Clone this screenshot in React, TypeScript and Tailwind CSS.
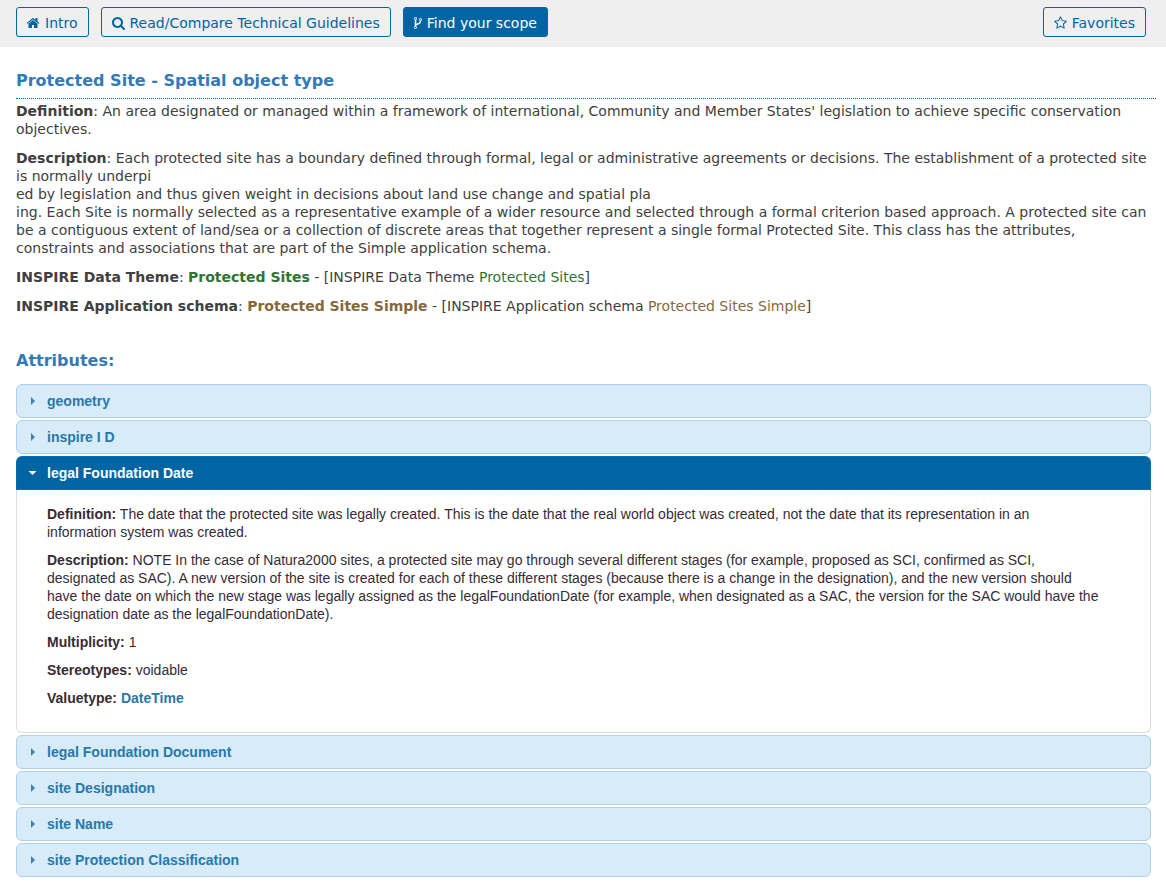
import { useState, type ReactNode } from "react";

const icons = {
  home: {
    box: "64 0 1664 1792",
    size: "h-[14px] w-[13px]",
    d: "M1408 992v480q0 26-19 45t-45 19h-384v-384h-256v384h-384q-26 0-45-19t-19-45v-480q0-1 .5-3t.5-3l575-474 575 474q1 2 1 6zm223-69l-62 74q-8 9-21 11h-3q-13 0-21-7l-692-577-692 577q-12 8-24 7-13-2-21-11l-62-74q-8-10-7-23.5t11-21.5l719-599q32-26 76-26t76 26l244 204v-195q0-14 9-23t23-9h192q14 0 23 9t9 23v408l219 182q10 8 11 21.5t-7 23.5z",
  },
  search: {
    box: "64 0 1664 1792",
    size: "h-[14px] w-[13px]",
    d: "M1216 832q0-185-131.5-316.5t-316.5-131.5-316.5 131.5-131.5 316.5 131.5 316.5 316.5 131.5 316.5-131.5 131.5-316.5zm512 832q0 52-38 90t-90 38q-54 0-90-38l-343-342q-179 124-399 124-143 0-273.5-55.5t-225-150-150-225-55.5-273.5 55.5-273.5 150-225 225-150 273.5-55.5 273.5 55.5 225 150 150 225 55.5 273.5q0 220-124 399l343 343q37 37 37 90z",
  },
  fork: {
    box: "384 0 1024 1792",
    size: "h-[14px] w-[8px]",
    d: "M672 1472q0-40-28-68t-68-28-68 28-28 68 28 68 68 28 68-28 28-68zm0-1152q0-40-28-68t-68-28-68 28-28 68 28 68 68 28 68-28 28-68zm640 128q0-40-28-68t-68-28-68 28-28 68 28 68 68 28 68-28 28-68zm96 0q0 52-26 96.5t-70 69.5q-2 287-226 414-67 38-203 81-128 40-169.5 71t-41.5 100v26q44 25 70 69.5t26 96.5q0 80-56 136t-136 56-136-56-56-136q0-52 26-96.5t70-69.5v-820q-44-25-70-69.5t-26-96.5q0-80 56-136t136-56 136 56 56 136q0 52-26 96.5t-70 69.5v497q54-26 154-57 55-17 87.5-29.5t70.5-31 59-39.5 40.5-51 28-69.5 8.5-91.5q-44-25-70-69.5t-26-96.5q0-80 56-136t136-56 136 56 56 136z",
  },
  star: {
    box: "64 0 1664 1792",
    size: "h-[14px] w-[13px]",
    d: "M1201 1004l306-297-422-62-189-382-189 382-422 62 306 297-73 421 378-199 377 199zm527-357q0 22-26 48l-363 354 86 500q1 7 1 20 0 50-41 50-19 0-40-12l-449-236-449 236q-22 12-40 12-21 0-31.5-14.5t-10.5-35.5q0-6 2-20l86-500-364-354q-25-27-25-48 0-37 56-46l502-73 225-455q19-41 49-41t49 41l225 455 502 73q56 9 56 46z",
  },
};

function ToolbarButton({ icon, active, children }: { icon: keyof typeof icons; active?: boolean; children: ReactNode }) {
  const { box, size, d } = icons[icon];
  return (
    <button
      type="button"
      className={`flex h-[30px] items-center gap-[5px] rounded-[3px] border border-[#0065a2] px-[10px] pt-[2px] whitespace-nowrap ${
        active ? "bg-[#0065a2] text-white" : "text-[#0065a2]"
      }`}
    >
      <svg viewBox={box} className={`shrink-0 fill-current ${size}`} aria-hidden="true">
        <path d={d} />
      </svg>
      {children}
    </button>
  );
}

function LegalFoundationDate() {
  return (
    <>
      <p>
        <b>Definition:</b> The date that the protected site was legally created. This is the date that the real world
        object was created, not the date that its representation in an information system was created.
      </p>
      <p>
        <b>Description:</b> NOTE In the case of Natura2000 sites, a protected site may go through several different
        stages (for example, proposed as SCI, confirmed as SCI, designated as SAC). A new version of the site is created
        for each of these different stages (because there is a change in the designation), and the new version should
        have the date on which the new stage was legally assigned as the legalFoundationDate (for example, when
        designated as a SAC, the version for the SAC would have the designation date as the legalFoundationDate).
      </p>
      <p>
        <b>Multiplicity:</b> 1
      </p>
      <p>
        <b>Stereotypes:</b> voidable
      </p>
      <p>
        <b>Valuetype:</b>{" "}
        <a href="#datetime" className="font-bold text-[#2779aa]">
          DateTime
        </a>
      </p>
    </>
  );
}

const attributes: { name: string; body?: ReactNode }[] = [
  { name: "geometry" },
  { name: "inspire I D" },
  { name: "legal Foundation Date", body: <LegalFoundationDate /> },
  { name: "legal Foundation Document" },
  { name: "site Designation" },
  { name: "site Name" },
  { name: "site Protection Classification" },
];

export default function App() {
  const [open, setOpen] = useState<number | null>(2);

  return (
    <div className="bg-white font-['Verdana','DejaVu_Sans',sans-serif] text-[14px] leading-[18px] text-[#404040]">
      <header className="flex gap-3 bg-[#efefef] pt-[7px] pr-5 pb-[10px] pl-4">
        <ToolbarButton icon="home">Intro</ToolbarButton>
        <ToolbarButton icon="search">Read/Compare Technical Guidelines</ToolbarButton>
        <ToolbarButton icon="fork" active>
          Find your scope
        </ToolbarButton>
        <div className="ml-auto">
          <ToolbarButton icon="star">Favorites</ToolbarButton>
        </div>
      </header>

      <main className="pt-6 pb-4 pl-4">
        <h1 className="mr-[10px] border-b border-dotted border-[#0065a2] pb-[7px] text-[16px] leading-[20px] font-bold text-[#337ab7]">
          Protected Site - Spatial object type
        </h1>
        <div className="mr-4 space-y-[11px] pt-[3px]">
          <p>
            <b>Definition</b>: An area designated or managed within a framework of international, Community and Member
            States' legislation to achieve specific conservation objectives.
          </p>
          <p>
            <b>Description</b>: Each protected site has a boundary defined through formal, legal or administrative
            agreements or decisions. The establishment of a protected site is normally underpi
            <br />
            ed by legislation and thus given weight in decisions about land use change and spatial pla
            <br />
            ing. Each Site is normally selected as a representative example of a wider resource and selected through a
            formal criterion based approach. A protected site can be a contiguous extent of land/sea or a collection of
            discrete areas that together represent a single formal Protected Site. This class has the attributes,
            constraints and associations that are part of the Simple application schema.
          </p>
          <p>
            <b>INSPIRE Data Theme</b>:{" "}
            <a href="#theme" className="font-bold text-[#2f7335]">
              Protected Sites
            </a>{" "}
            - [INSPIRE Data Theme{" "}
            <a href="#theme" className="text-[#2f7335]">
              Protected Sites
            </a>
            ]
          </p>
          <p>
            <b>INSPIRE Application schema</b>:{" "}
            <a href="#schema" className="font-bold text-[#85693c]">
              Protected Sites Simple
            </a>{" "}
            - [INSPIRE Application schema{" "}
            <a href="#schema" className="text-[#85693c]">
              Protected Sites Simple
            </a>
            ]
          </p>
        </div>

        <h2 className="mt-9 text-[16px] leading-[20px] font-bold text-[#337ab7]">Attributes:</h2>
        <div className="mt-[13px] mr-[15px] flex flex-col gap-[2px] font-['Liberation_Sans',Arial,sans-serif]">
          {attributes.map(({ name, body }, i) => {
            const isOpen = open === i;
            return (
              <section key={name}>
                <h3>
                  <button
                    type="button"
                    aria-expanded={isOpen}
                    onClick={() => setOpen(isOpen ? null : i)}
                    className={`flex h-[34px] w-full items-center gap-[6px] border pl-[10px] text-left font-bold ${
                      isOpen
                        ? "rounded-t-[6px] border-[#2694e8]/20 bg-[#0065a2] text-white"
                        : "rounded-[6px] border-[#aed0ea] bg-[#d7ebf9] text-[#2779aa]"
                    }`}
                  >
                    <svg viewBox="0 0 14 14" className="h-[14px] w-[14px] shrink-0" aria-hidden="true">
                      {isOpen ? (
                        <path d="M1.500 5h8L5.500 9z" className="fill-white" />
                      ) : (
                        <path d="M4 3v8l4-4z" className="fill-[#3d80b3]" />
                      )}
                    </svg>
                    {name}
                  </button>
                </h3>
                {isOpen && (
                  <div className="space-y-[10px] rounded-b-[6px] border border-t-0 border-[#dddddd] pt-[15px] pr-[50px] pb-[25px] pl-[30px] text-[#362b36]">
                    {body}
                  </div>
                )}
              </section>
            );
          })}
        </div>
      </main>
    </div>
  );
}
